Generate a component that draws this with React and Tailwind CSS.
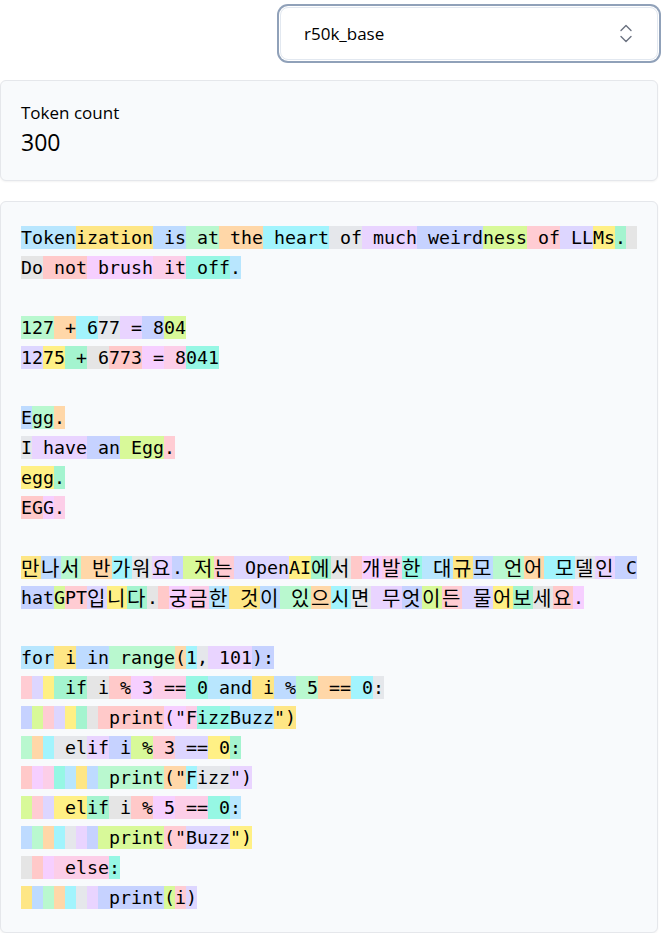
import React from "react";

// token colours, cycled in order like the tokenizer view does
const COLORS = [
  "bg-sky-200",
  "bg-amber-200",
  "bg-blue-200",
  "bg-green-200",
  "bg-orange-200",
  "bg-cyan-200",
  "bg-gray-200",
  "bg-purple-200",
  "bg-indigo-200",
  "bg-lime-200",
  "bg-rose-200",
  "bg-violet-200",
  "bg-yellow-200",
  "bg-emerald-200",
  "bg-neutral-200",
  "bg-red-200",
  "bg-fuchsia-200",
  "bg-pink-200",
  "bg-teal-200",
];

const S = " ";
const INDENT8 = [S, S, S, S, S, S, S];

// "|" marks where a token wraps onto the next visual line
const TOKENS = [
  "Token", "ization", " is", " at", " the", " heart", " of", " much", " weird", "ness", " of", " LL", "Ms", ".", " |Do", " not", " brush", " it", " off", ".", "\n", "\n",
  "127", " +", " 6", "77", " =", " 8", "04", "\n",
  "12", "75", " +", " 6", "773", " =", " 8", "041", "\n", "\n",
  "E", "gg", ".", "\n",
  "I", " have", " an", " Egg", ".", "\n",
  "egg", ".", "\n",
  "EG", "G", ".", "\n", "\n",
  "만", "나", "서", " 반", "가", "워", "요", ".", " 저", "는", " Open", "AI", "에", "서", " ", "개", "발", "한", " 대", "규", "모", " 언", "어", " 모", "델", "인", " C|hat",
  "G", "PT", "입", "니", "다", ".", " ", "궁", "금", "", "한", " 것", "이", " 있", "으", "시", "면", " 무", "엇", "이", "든", " 물", "어", "보", "세", "요", ".", "\n", "\n",
  "for", " i", " in", " range", "(", "1", ",", " 101", "):", "\n",
  S, S, S, " if", " i", " %", " 3", " ==", " 0", " and", " i", " %", " 5", " ==", " 0", ":", "\n",
  ...INDENT8, " print", "(\"", "F", "izz", "Buzz", "\")", "\n",
  S, S, S, " el", "if", " i", " %", " 3", " ==", " 0", ":", "\n",
  ...INDENT8, " print", "(\"", "F", "izz", "\")", "\n",
  S, S, S, " el", "if", " i", " %", " 5", " ==", " 0", ":", "\n",
  ...INDENT8, " print", "(\"", "Buzz", "\")", "\n",
  S, S, S, " else", ":", "\n",
  ...INDENT8, " print", "(", "i", ")",
];

function buildLines(tokens) {
  const lines = [[]];
  tokens.forEach((t, i) => {
    const color = COLORS[i % COLORS.length];
    if (t === "\n") {
      lines.push([]);
      return;
    }
    t.split("|").forEach((part, j) => {
      if (j > 0) lines.push([]);
      if (part) lines[lines.length - 1].push({ text: part, color, key: `${i}-${j}` });
    });
  });
  return lines;
}

// hangul is wider than the mono glyphs, give it its own size
const TokenText = ({ text }) =>
  text.split(/([\uAC00-\uD7A3]+)/).map((run, i) =>
    /[\uAC00-\uD7A3]/.test(run) ? (
      <span key={i} className="text-[20px] tracking-[1.6px]" style={{ fontFamily: "'Noto Sans CJK KR', sans-serif" }}>
        {run}
      </span>
    ) : (
      run
    )
  );

const ChevronsUpDown = () => (
  <svg width="12" height="19" viewBox="0 0 12 19" fill="none" stroke="#6b7280" strokeWidth="1.4" strokeLinecap="round" strokeLinejoin="round">
    <path d="M1 6.5 6 1.5 11 6.5" />
    <path d="M1 12.5 6 17.5 11 12.5" />
  </svg>
);

export default function App() {
  const lines = buildLines(TOKENS);

  return (
    <div className="w-[658px] pt-[7px] flex flex-col gap-5 text-black" style={{ fontFamily: "'Open Sans', sans-serif" }}>
      <div className="flex justify-end">
        <div className="w-[378px] h-[53px] flex items-center justify-between pl-[23px] pr-[25px] bg-white border border-slate-200 rounded-lg ring-2 ring-slate-400 ring-offset-1">
          <span className="text-[17px]">r50k_base</span>
          <ChevronsUpDown />
        </div>
      </div>

      <div className="bg-slate-50 border border-gray-200 rounded-md shadow-xs px-5 pt-5 pb-[22px]">
        <p className="text-[17px] leading-6">Token count</p>
        <p className="text-[23px] leading-8 mt-px">300</p>
      </div>

      <div className="bg-slate-50 border border-gray-200 rounded-md shadow-xs p-5">
        <div className="text-[18.27px]" style={{ fontFamily: "'DejaVu Sans Mono', 'Noto Sans CJK KR', monospace" }}>
          {lines.map((line, i) => (
            <div key={i} className="h-[30px] flex items-center">
              {line.map((tok) => (
                <span key={tok.key} className={`${tok.color} h-[23px] leading-[23px] whitespace-pre`}>
                  <TokenText text={tok.text} />
                </span>
              ))}
            </div>
          ))}
        </div>
      </div>
    </div>
  );
}
